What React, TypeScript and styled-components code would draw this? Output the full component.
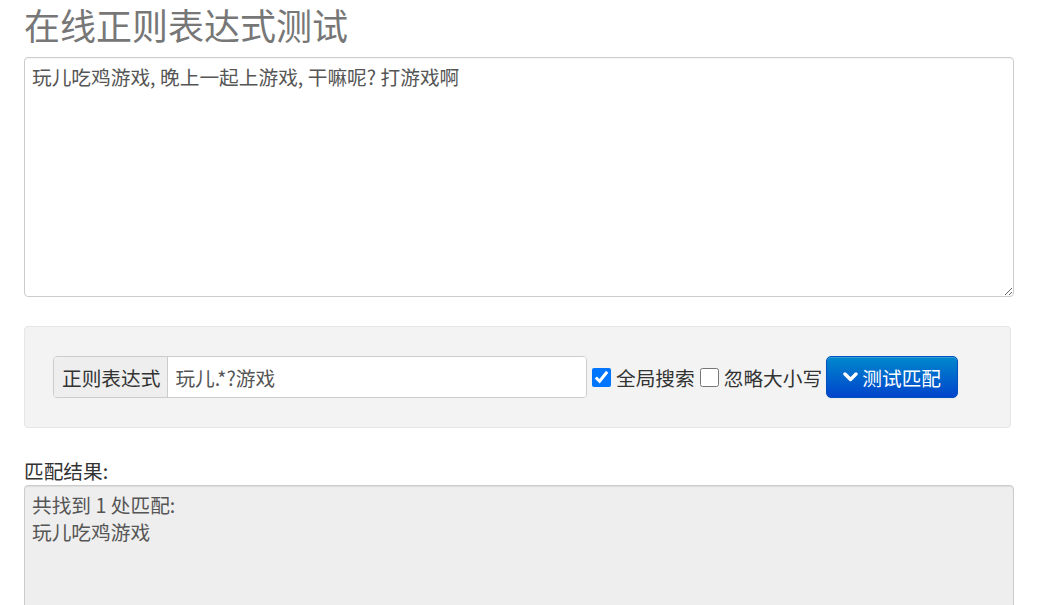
import { useState } from 'react';
import styled, { createGlobalStyle } from 'styled-components';

const GlobalStyle = createGlobalStyle`
  html, body {
    margin: 0;
    padding: 0;
    background: #fff;
  }
  body {
    font-family: "Noto Sans CJK SC", "Liberation Sans", sans-serif;
    color: #333;
  }
  * {
    box-sizing: border-box;
  }
`

function App() {
  const [text, setText] = useState('玩儿吃鸡游戏, 晚上一起上游戏, 干嘛呢? 打游戏啊')
  const [pattern, setPattern] = useState('玩儿.*?游戏')
  const [globalSearch, setGlobalSearch] = useState(true)
  const [ignoreCase, setIgnoreCase] = useState(false)

  return (
    <Page>
      <GlobalStyle />
      <Title>在线正则表达式测试</Title>
      <SourceText value={text} onChange={(e) => setText(e.target.value)} />
      <Well>
        <InputGroup>
          <Addon>正则表达式</Addon>
          <PatternInput value={pattern} onChange={(e) => setPattern(e.target.value)} />
        </InputGroup>
        <CheckLabel>
          <Check type="checkbox" checked={globalSearch} onChange={() => setGlobalSearch(!globalSearch)} />
          全局搜索
        </CheckLabel>
        <CheckLabel>
          <Check type="checkbox" checked={ignoreCase} onChange={() => setIgnoreCase(!ignoreCase)} />
          忽略大小写
        </CheckLabel>
        <TestBtn>
          <svg width="15" height="12" viewBox="0 0 15 12">
            <path d="M2 3 L7.5 8.5 L13 3" fill="none" stroke="#fff" strokeWidth="3.4" strokeLinecap="round" strokeLinejoin="round" />
          </svg>
          测试匹配
        </TestBtn>
      </Well>
      <ResultLabel>匹配结果:</ResultLabel>
      <ResultBox>
        {'共找到 1 处匹配:\n玩儿吃鸡游戏'}
      </ResultBox>
    </Page>
  )
}

export default App;

const FONT_SIZE = '19.7px'

const Page = styled.div`
  width: 990px;
  margin-left: 24px;
  padding-top: 4px;
`
const Title = styled.h1`
  margin: 0 0 12px 0;
  font-size: 36px;
  line-height: 41px;
  font-weight: normal;
  color: #777;
`
const SourceText = styled.textarea`
  display: block;
  width: 990px;
  height: 240px;
  margin: 0 0 29px 0;
  padding: 5px 7px 6px;
  border: 1px solid #ccc;
  border-radius: 4px;
  font-family: inherit;
  font-size: ${FONT_SIZE};
  line-height: 27px;
  color: #555;
  background: #fff;
  outline: none;
  box-shadow: inset 0 1px 1px rgba(0, 0, 0, 0.04);
`
const Well = styled.div`
  display: flex;
  align-items: center;
  width: 987px;
  height: 102px;
  padding: 0 28px;
  margin-bottom: 29px;
  background: #f3f3f3;
  border: 1px solid #e6e6e6;
  border-radius: 4px;
`
const InputGroup = styled.div`
  display: flex;
  width: 534px;
  height: 42px;
  border: 1px solid #ccc;
  border-radius: 4px;
  overflow: hidden;
  background: #fff;
`
const Addon = styled.span`
  display: flex;
  align-items: center;
  padding: 0 7px 0 8px;
  background: #eee;
  border-right: 1px solid #ccc;
  font-size: ${FONT_SIZE};
  color: #333;
`
const PatternInput = styled.input`
  flex: 1;
  min-width: 0;
  border: none;
  outline: none;
  padding: 0 7px;
  font-family: inherit;
  font-size: ${FONT_SIZE};
  color: #555;
  background: #fff;
`
const CheckLabel = styled.label`
  display: flex;
  align-items: center;
  font-size: ${FONT_SIZE};
  color: #333;
`
const Check = styled.input`
  width: 19px;
  height: 19px;
  margin: 0 5px 0 5px;
  accent-color: #0075ff;
`
const TestBtn = styled.button`
  display: flex;
  align-items: center;
  justify-content: center;
  gap: 4px;
  width: 132px;
  height: 42px;
  margin-left: 4px;
  padding: 0;
  border: 1px solid #0050c0;
  border-radius: 5px;
  background: linear-gradient(to bottom, #0088cc, #0044cc);
  color: #fff;
  font-family: inherit;
  font-size: ${FONT_SIZE};
  cursor: pointer;
  box-shadow: inset 0 1px 0 rgba(255, 255, 255, 0.2), 0 1px 2px rgba(0, 0, 0, 0.05);
`
const ResultLabel = styled.div`
  font-size: ${FONT_SIZE};
  line-height: 27px;
  color: #333;
  margin-bottom: 1px;
`
const ResultBox = styled.div`
  width: 990px;
  height: 200px;
  padding: 5px 7px;
  border: 1px solid #ccc;
  border-radius: 4px;
  background: #eee;
  font-size: ${FONT_SIZE};
  line-height: 27px;
  color: #555;
  white-space: pre-line;
  box-shadow: inset 0 1px 1px rgba(0, 0, 0, 0.075);
`
